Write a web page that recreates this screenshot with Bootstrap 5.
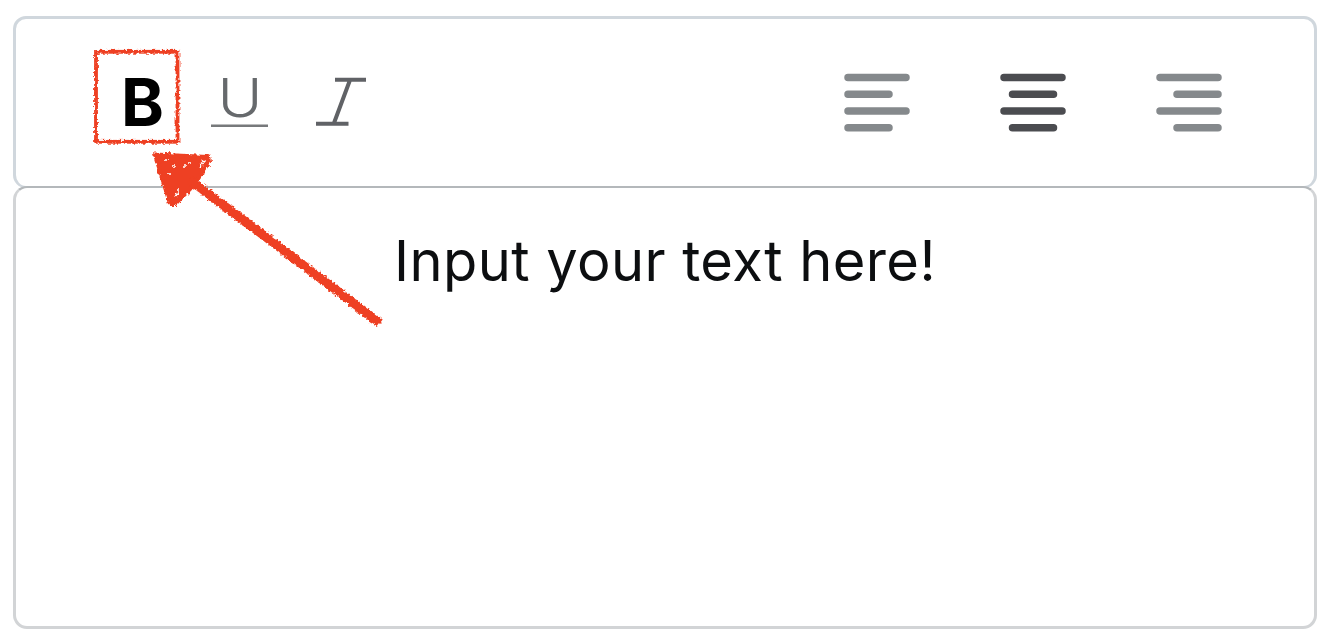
<!DOCTYPE html>
<html lang="en">
<head>
  <meta charset="UTF-8">
  <meta name="viewport" content="width=device-width, initial-scale=1">
  <title>Text Editor</title>
  <link rel="stylesheet" href="https://cdn.jsdelivr.net/npm/bootstrap@5.3.0/dist/css/bootstrap.min.css">
  <style>
    body {
      background-color: #fff;
      font-family: Inter, "Liberation Sans", sans-serif;
      overflow: hidden;
    }
    .editor {
      height: 644px;
      padding: 16px 13px 15px;
    }
    .editor-toolbar {
      height: 172px;
      padding: 32px 91px 0 78px;
      border: 3px solid #d0d7dd;
      border-bottom: 2px solid #d0d7dd;
      border-radius: 13px;
    }
    .editor-area {
      height: 443px;
      margin-top: -2px;
      padding-top: 37px;
      border: 3px solid #d2d4d6;
      border-top: 2px solid #b4b8bb;
      border-radius: 14px;
      font-size: 56px;
      line-height: 72px;
      letter-spacing: .42px;
      color: #0c0e10;
    }
    .tool {
      border: 0;
      background: none;
      padding: 0;
      line-height: 0;
    }
    .tool svg { display: block; }
    .format-tools { gap: 25px; }
    .align-tools { gap: 88px; padding-top: 20px; }
    .align-tools .tool { color: #85898c; }
    .align-tools .tool.active { color: #4b4c50; }
    .hint {
      left: 0;
      top: 0;
      pointer-events: none;
    }
  </style>
</head>
<body>
  <main class="editor position-relative">
    <div class="editor-toolbar d-flex justify-content-between align-items-start">
      <div class="format-tools d-flex">
        <button type="button" class="tool" aria-label="Bold">
          <svg width="92" height="92" viewBox="94 51 92 92">
            <text x="121" y="126" font-size="66" font-weight="700" textLength="43" lengthAdjust="spacingAndGlyphs" fill="#000">B</text>
          </svg>
        </button>
        <button type="button" class="tool" aria-label="Underline">
          <svg width="57" height="92" viewBox="211 51 57 92">
            <text x="217.500" y="116.500" font-size="54" font-weight="300" textLength="45" lengthAdjust="spacingAndGlyphs" fill="#66696c">U</text>
            <path d="M211 125.800H268.500" stroke="#77797b" stroke-width="2.600"/>
          </svg>
        </button>
        <button type="button" class="tool" aria-label="Italic">
          <svg width="60" height="92" viewBox="293 51 60 92" overflow="visible">
            <path d="M335 79.700H366M316 123.700H348.500M350 80L334 123" fill="none" stroke="#606266" stroke-width="4"/>
          </svg>
        </button>
      </div>
      <div class="align-tools d-flex">
        <button type="button" class="tool" aria-label="Align left">
          <svg width="68" height="64" viewBox="0 0 68 64" stroke="currentColor" stroke-width="7.500" stroke-linecap="round">
            <path d="M5 6.500H63M5 23.300H46M5 40H63M5 56.700H46"/>
          </svg>
        </button>
        <button type="button" class="tool active" aria-label="Align center">
          <svg width="68" height="64" viewBox="0 0 68 64" stroke="currentColor" stroke-width="7.500" stroke-linecap="round">
            <path d="M5 6.500H63M13.500 23.300H54.500M5 40H63M13.500 56.700H54.500"/>
          </svg>
        </button>
        <button type="button" class="tool" aria-label="Align right">
          <svg width="68" height="64" viewBox="0 0 68 64" stroke="currentColor" stroke-width="7.500" stroke-linecap="round">
            <path d="M5 6.500H63M22 23.300H63M5 40H63M22 56.700H63"/>
          </svg>
        </button>
      </div>
    </div>
    <div class="editor-area text-center" contenteditable="true" spellcheck="false">Input your text here!</div>

    <!-- crayon frame and arrow over the bold button -->
    <svg class="hint position-absolute" width="400" height="340" viewBox="0 0 400 340">
      <defs>
        <filter id="crayon" filterUnits="userSpaceOnUse" x="80" y="35" width="320" height="300" color-interpolation-filters="sRGB">
          <feTurbulence type="fractalNoise" baseFrequency="0.35" numOctaves="2" seed="4" result="noise"/>
          <feDisplacementMap in="SourceGraphic" in2="noise" scale="5" xChannelSelector="R" yChannelSelector="G"/>
        </filter>
      </defs>
      <g filter="url(#crayon)" fill="none" stroke="#ee4023">
        <rect x="96" y="51.800" width="81.500" height="90" stroke-width="3.800"/>
        <path d="M155 154.500L208 157L209 162L198 179L190 189L175 204L170 204Z" fill="#ee4023" stroke-width="4" stroke-linejoin="round"/>
        <path d="M190 180L380 323" stroke-width="9"/>
        <path d="M193 188L229 214M242 224L272 244M284 255L311 274M318 281L339 296M348 305L374 324" stroke-width="2" stroke-dasharray="3 2 1 3"/>
        <path d="M201 160L204 162L200 167M174 164V168M184 166H187M176 196L178 192M188 163H191M168 174H171M178 189V192M165 160H168" stroke="#fff" stroke-width="1.500"/>
      </g>
    </svg>
  </main>
  <script src="https://cdn.jsdelivr.net/npm/bootstrap@5.3.0/dist/js/bootstrap.bundle.min.js"></script>
</body>
</html>
